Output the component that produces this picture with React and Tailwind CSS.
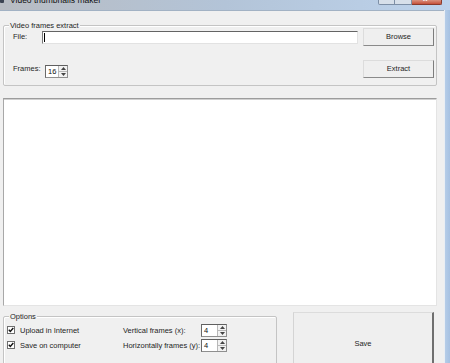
import React from 'react'

const FONT = "font-['Liberation_Sans',Arial,sans-serif]"

function GroupLabel({ children }) {
  return (
    <span className="absolute left-[5px] -top-[5.5px] bg-[#f0f0f0] px-[1px] leading-[9px] text-[7.5px] text-[#1e1e1e]">
      {children}
    </span>
  )
}

function WinButton({ className, children }) {
  return (
    <div
      className={`flex items-center justify-center border border-t-[#dcdcdc] border-l-[#dcdcdc] border-r-[#7d7d7d] border-b-[#8a8a8a] bg-[#efefef] text-[7.5px] text-[#1e1e1e] ${className}`}
    >
      {children}
    </div>
  )
}

function Spin({ value, className }) {
  return (
    <div
      className={`flex items-stretch border border-[#8f8f8f] border-t-[#5f5f5f] border-l-[#6a6a6a] bg-white ${className}`}
    >
      <span className="flex-1 pl-[2px] text-[7.5px] leading-[11px] text-[#111]">{value}</span>
      <div className="flex w-[9px] flex-col border-l border-[#b8b8b8] bg-[#f2f2f2]">
        <div className="flex flex-1 items-center justify-center border-b border-[#b8b8b8]">
          <svg width="5" height="3" viewBox="0 0 5 3">
            <path d="M2.5 0L5 3H0z" fill="#444" />
          </svg>
        </div>
        <div className="flex flex-1 items-center justify-center">
          <svg width="5" height="3" viewBox="0 0 5 3">
            <path d="M0 0h5L2.5 3z" fill="#444" />
          </svg>
        </div>
      </div>
    </div>
  )
}

function Check({ children }) {
  return (
    <div className="flex items-center gap-[5px]">
      <svg width="8" height="8" viewBox="0 0 8 8" className="shrink-0">
        <rect x="0.5" y="0.5" width="7" height="7" fill="#fff" stroke="#6e6e6e" />
        <path d="M1.8 3.8L3.3 5.4L6.3 2" fill="none" stroke="#111" strokeWidth="1.4" />
      </svg>
      <span className="text-[7.5px] leading-[9px] text-[#1e1e1e]">{children}</span>
    </div>
  )
}

function TitleBar() {
  return (
    <div className="flex h-[10px] items-start overflow-hidden bg-gradient-to-r from-[#b8bcc2] via-[#b3c4d8] to-[#bdd3ec]">
      <div className="mt-[-3px] h-[6px] w-[4px] rounded-[1px] bg-[#3c4452]" />
      <span className="ml-[6px] mt-[-4px] whitespace-nowrap text-[8.5px] leading-[9px] text-[#111]">
        Video thumbnails maker
      </span>
      <div className="ml-auto mr-[8px] flex">
        <div className="h-[5px] w-[17px] rounded-bl-[2px] border border-t-0 border-[#7d8fa6] bg-[#d7e0ea]" />
        <div className="h-[5px] w-[17px] border border-t-0 border-l-0 border-[#7d8fa6] bg-[#d7e0ea]" />
        <div className="relative h-[5px] w-[30px] rounded-br-[2px] border border-t-0 border-l-0 border-[#8a3a2c] bg-gradient-to-b from-[#d9917f] to-[#c5503a]">
          <span className="absolute left-[11px] -top-[5px] text-[8px] font-bold leading-[8px] text-white">x</span>
        </div>
      </div>
    </div>
  )
}

export default function App() {
  return (
    <div className={`flex h-[363px] w-[450px] flex-col overflow-hidden bg-[#f0f0f0] ${FONT}`}>
      <TitleBar />
      <div className="flex min-h-0 flex-1">
        <div className="flex w-[444px] flex-col border-t border-[#a2b2c4]">
          {/* Video frames extract */}
          <div className="relative ml-[3px] mt-[14px] h-[61px] w-[434px] shrink-0 rounded-[2px] border border-[#c4c4c4] pt-[2px] pr-[2px] shadow-[inset_1px_1px_0_#ffffff]">
            <GroupLabel>Video frames extract</GroupLabel>
            <div className="flex h-[18px] items-center pl-[9px]">
              <span className="w-[29px] text-[7.5px] text-[#1e1e1e]">File:</span>
              <div className="flex h-[13px] w-[316px] items-center border border-t-[#646464] border-l-[#7a7a7a] border-r-[#e2e2e2] border-b-[#e2e2e2] bg-white">
                <span className="ml-[1px] h-[9px] w-[1px] bg-black" />
              </div>
              <WinButton className="ml-[5px] h-[18px] w-[71px]">Browse</WinButton>
            </div>
            <div className="mt-[14px] flex h-[18px] items-center pl-[9px]">
              <span className="w-[32px] text-[7.5px] text-[#1e1e1e]">Frames:</span>
              <Spin value="16" className="mt-[4px] h-[13px] w-[23px]" />
              <WinButton className="ml-auto h-[18px] w-[71px]">Extract</WinButton>
            </div>
          </div>

          {/* preview area */}
          <div className="ml-[3px] mt-[12px] h-[208px] w-[434px] shrink-0 border border-t-[#9c9c9c] border-l-[#a8a8a8] border-r-[#e4e4e4] border-b-[#e4e4e4] bg-white shadow-[inset_0_1px_0_#d0d0d0]" />

          {/* bottom */}
          <div className="mt-[6px] flex items-start">
            <div className="relative ml-[3px] mt-[4px] h-[60px] w-[274px] shrink-0 rounded-[2px] border border-[#c4c4c4] pl-[3px] pt-[6px] shadow-[inset_1px_1px_0_#ffffff]">
              <GroupLabel>Options</GroupLabel>
              <div className="grid grid-cols-[116px_78px_26px] grid-rows-[14px_14px] gap-y-[1px]">
                <div className="flex items-center">
                  <Check>Upload in Internet</Check>
                </div>
                <span className="self-center text-[7.5px] leading-[9px] text-[#1e1e1e]">Vertical frames (x):</span>
                <Spin value="4" className="h-[13px] w-[26px] self-center" />
                <div className="flex items-center">
                  <Check>Save on computer</Check>
                </div>
                <span className="self-center whitespace-nowrap text-[7.5px] leading-[9px] text-[#1e1e1e]">
                  Horizontally frames (y):
                </span>
                <Spin value="4" className="h-[13px] w-[26px] self-center" />
              </div>
            </div>
            <div className="ml-[16px] flex h-[64px] w-[141px] shrink-0 items-center justify-center border border-t-[#dcdcdc] border-l-[#d4d4d4] border-r-[2px] border-r-[#6f6f6f] border-b-[#8a8a8a] bg-[#efefef] text-[7.5px] text-[#1e1e1e]">
              Save
            </div>
          </div>
        </div>
        <div className="flex-1 border-l border-[#e9eef4] bg-gradient-to-r from-[#b6cde8] to-[#a6c1e2]" />
      </div>
    </div>
  )
}
